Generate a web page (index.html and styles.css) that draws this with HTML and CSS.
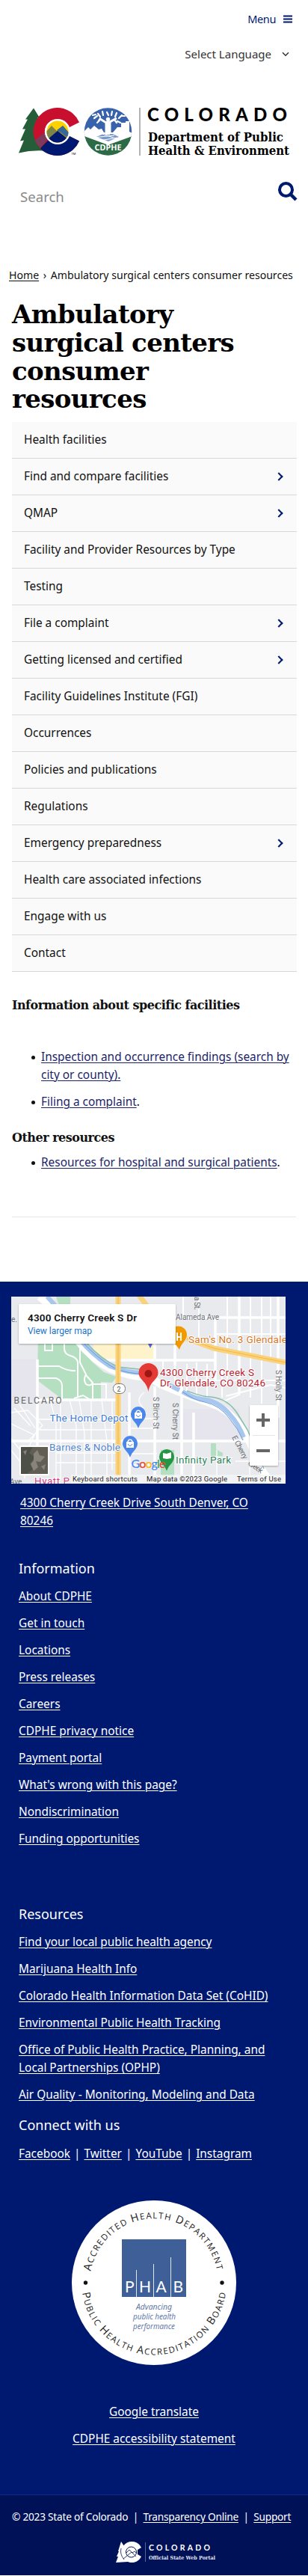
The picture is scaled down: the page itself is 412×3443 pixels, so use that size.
FILE: index.html
```html
<!DOCTYPE html>
<html lang="en">
<head>
<meta charset="utf-8">
<title>Ambulatory surgical centers consumer resources</title>
<link rel="stylesheet" href="styles.css">
</head>
<body>
<header class="top">
  <a class="menu-toggle">Menu
    <svg width="12" height="11" viewBox="0 0 12 11"><path d="M0 1.5h12M0 5.5h12M0 9.5h12" stroke="#001970" stroke-width="1.8"/></svg>
  </a>
  <div class="language"><span>Select Language</span>
    <svg width="10" height="7" viewBox="0 0 10 7"><path d="M1 1.2l4 4 4-4" fill="none" stroke="#333" stroke-width="1.5"/></svg>
  </div>
  <svg class="logo" width="364" height="64" viewBox="25 144 364 64">
    <defs>
      <clipPath id="disc"><circle cx="77" cy="176" r="14.5"/></clipPath>
      <clipPath id="seal"><circle cx="144.500" cy="176" r="31.700"/></clipPath>
      <clipPath id="cshape"><path d="M106 163.500A32 32 0 1 0 106 188.500L91 181A16 16 0 1 1 91 171Z"/></clipPath>
    </defs>
    <path d="M45 144.500l8 13-3 0 6 12-3 0 6 32q-17-1-34 3l7-17-5 1 7-16-4 0 7-13-3 0z" fill="#245d38"/>
    <g clip-path="url(#cshape)">
      <path d="M40 140h70v70H40z" fill="#c8102e"/>
      <path d="M54 198l22-22h34v34H60z" fill="#001970"/>
      <path d="M46 188l14-11 6 6-12 15z" fill="#7d3b5c"/>
    </g>
    <circle cx="77" cy="176" r="17" fill="#fff"/>
    <g clip-path="url(#disc)">
      <path d="M60 158h34v36H60z" fill="#ffd100"/>
      <path d="M60 178l9-10 7 7 8-7 12 14v12H60z" fill="#7d8446"/>
      <path d="M76 174l8-6 14 16-10-2-6-5z" fill="#34699a"/>
      <path d="M58 191l19-16 20 16v8H58z" fill="#001970"/>
    </g>
    <text class="tm" x="95.500" y="206.500">TM</text>
    <g clip-path="url(#seal)">
      <path d="M110 140h70v45H110z" fill="#3862ac"/>
      <path d="M112 176l6-6 3 3 5-5 6 5 4-1 3 5h12l6-7h5v-6h6v-2h5v14l4 2v5l-33 12-32-12z" fill="#fff"/>
      <path d="M129 183l9-4h13l8 4-14 6z" fill="#7898cc"/>
      <path d="M124 184l29-3M133 188l24-4M137 179l20 7" stroke="#fff"/>
      <path d="M112 181l32.500 12 33-12v32h-66z" fill="#2c6b45" stroke="#fff" stroke-width="1.500"/>
      <path d="M142 179v-15l-8-5M147 179v-16l9-5" fill="none" stroke="#fff" stroke-width="3"/>
      <path d="M142 162h5v18h-6z" fill="#fff"/>
      <circle cx="144.500" cy="159.500" r="2.700" fill="#fff"/>
      <path d="M126 158l4-3M130 164l3-3M124 154l4-1M131 152l3 4M137 149l1 5M143 150l2 4M149 154l1-5M154 156l2-5M159 158l4-4M157 162l4 2M163 155h4M134 158l-3 5M153 160l3 4" stroke="#fff" stroke-width="2.200" stroke-linecap="round"/>
    </g>
    <text class="seal-text" x="126.500" y="200.500" textLength="36" lengthAdjust="spacingAndGlyphs">CDPHE</text>
    <path d="M187 144v64" stroke="#666"/>
    <text class="logo-name" x="197" y="161.500" textLength="187">COLORADO</text>
    <text class="logo-dept" x="198" y="189" textLength="181" lengthAdjust="spacingAndGlyphs">Department of Public</text>
    <text class="logo-dept" x="198" y="207" textLength="189" lengthAdjust="spacingAndGlyphs">Health &amp; Environment</text>
  </svg>
  <div class="search"><span>Search</span>
    <svg width="26" height="26" viewBox="0 0 26 26" fill="none" stroke="#001970"><circle cx="10.500" cy="10.500" r="8.500" stroke-width="4"/><path d="M17 17l7 7" stroke-width="4.500"/></svg>
  </div>
</header>
<main>
  <nav class="crumbs"><a>Home</a> <span>›</span> Ambulatory surgical centers consumer resources</nav>
  <h1>Ambulatory<br>surgical centers<br>consumer<br>resources</h1>
  <ul class="side-menu">
    <li>Health facilities</li>
    <li class="more">Find and compare facilities</li>
    <li class="more">QMAP</li>
    <li>Facility and Provider Resources by Type</li>
    <li>Testing</li>
    <li class="more">File a complaint</li>
    <li class="more">Getting licensed and certified</li>
    <li>Facility Guidelines Institute (FGI)</li>
    <li>Occurrences</li>
    <li>Policies and publications</li>
    <li>Regulations</li>
    <li class="more">Emergency preparedness</li>
    <li>Health care associated infections</li>
    <li>Engage with us</li>
    <li>Contact</li>
  </ul>
  <section class="content">
    <h2>Information about specific facilities</h2>
    <ul class="first">
      <li><a>Inspection and occurrence findings (search by<br>city or county).</a></li>
      <li><a>Filing a complaint</a>.</li>
    </ul>
    <h2 class="other">Other resources</h2>
    <ul><li><a>Resources for hospital and surgical patients</a>.</li></ul>
    <hr>
  </section>
</main>
<footer>
  <svg class="map" width="367" height="250" viewBox="0 0 367 250">
    <path d="M0 0h367v250H0z" fill="#e8eaed"/>
    <path d="M0 84h35v55H0zM230 150h75v43h-75z" fill="#e6e5ed"/>
    <path d="M110 60h82v23h-82z" fill="#fef3cb"/>
    <path d="M36 55h50l22 32 16 14 17 6-6 8-15-1v23H79l-6-1v1H68l-33-25zM60 0h19v12H64z" fill="#b5dfc1"/>
    <path d="M200 205h18v35h-18zM267 196h7v8l9 5v4h-16z" fill="#b5dfc1"/>
    <g fill="none" stroke="#fff" stroke-width="2">
      <path d="M35 138h106M35 84v153M0 193h367M126 85h147M200 28h167M158 128v116M192 120v124M219 40v52M228 120v118M244 155v90M273 28v85M305 0v130M357 0v162M192 85v-22" stroke-width="3.500"/>
      <path d="M230 0v28M251 0v58M289 0v110M320 0v135M335 0v143M347 0v84M203 85v20M219 85v45M235 90v37M248 88v45M262 90v50M282 135v-39M245 112h122M275 50h92M287 133l60-15 20 4M284 140l21-9v-20"/>
      <path d="M45 57v15h10V57M71 55v14q0 8 8 10t10 8v47M36 93h28q12 7 22 6M36 109h24q8 3 8 10v18M92 57v31l8 16q-4 7 0 13 6 4 9-2l-9-10M84 136l12-4 10 6M109 136v-19h18v19"/>
      <path d="M52 138l8 30v75M66 140v104M78 138l9 35v70M91 138l7 45v60M107 138v106M121 138l7 55v50M135 138v94M37 164h100M38 178h100M60 209h80M60 222h80M178 128q-12 9-3 19l6 10M145 163h45M160 176h35M160 210h35M158 225h34M275 205v40M319 192v50M335 193v50M300 220h67M0 155l22-3 20 20-18 20M0 170l31 15-16 35M4 149l22 24M11 144l21 32M0 190l18 23v30M-2 203l27 34M144 20h-10" stroke-width="1.300"/>
    </g>
    <path d="M38 0l30 27q10 12 22 33 17 23 44 37 26 11 51 11l16 10q31 13 55 21 25 7 38 20 24 23 36 65l18 26" fill="none" stroke="#fff" stroke-width="10"/>
    <path d="M48 0l25 27 19 30q15 20 40 36 23 9 46 9M211 118l14 7m4 2q13 8 26 10 22 2 37 20 12 13 19 31" fill="none" stroke="#a8c7ee" stroke-width="6"/>
    <path d="M93 58q20 23 44 37 20 9 42 8M229 127q16 12 30 14 20 4 33 22 12 14 18 29" fill="none" stroke="#6799db"/>
    <path d="M100 61q20 23 43 33l37 4M235 126q20 8 31 8 24 2 37 23l13 21 22 52" fill="none" stroke="#87bea9" stroke-width="1.500"/>
    <path d="M143 0v240M170-3l12 16M235 56l36 13 96 19" fill="none" stroke="#f9d27a" stroke-width="7"/>
    <path d="M143 0v240M235 56l36 13 96 19" fill="none" stroke="#f5b64b" stroke-width="1"/>
    <rect x="136.500" y="116.500" width="16" height="13" rx="6" fill="#fff" stroke="#777"/><text x="141.500" y="126.500" font-size="9" fill="#555">2</text>
    <g class="road-label">
      <text x="0" y="34">e.</text><text x="220" y="31" textLength="58">Alameda Ave</text>
      <text transform="translate(245 0) rotate(90)" textLength="18">a St.</text>
      <text transform="translate(354 98) rotate(90)" textLength="41">S Holly St</text>
      <text transform="translate(190 134) rotate(90)" textLength="43">S Birch St</text>
      <text transform="translate(216 142) rotate(90)" textLength="49">S Cherry St</text>
      <text transform="translate(295 188) rotate(62)" textLength="34">E Cherry</text>
      <text transform="translate(316 224) rotate(35)" textLength="22">Creek</text>
      <text x="-2" y="251">Ave.</text>
    </g>
    <text x="3.500" y="143" font-size="12" fill="#666" textLength="64">BELCARO</text>
    <g class="pins">
      <path d="M225 71c-6-10-13-12-13-20a11 11 0 0 1 23 0c0 8-8 11-10 20z" fill="#f29900"/>
      <path d="M170 176c-3-9-10-11-10-19a10 10 0 0 1 20 0c0 8-7 10-10 19z" fill="#4a86ec"/>
      <path d="M159 215c-3-9-10-11-10-19a10 10 0 0 1 20 0c0 8-7 10-10 19z" fill="#4a86ec"/>
      <path d="M208 233c-3-9-10-11-10-19a10 10 0 0 1 20 0c0 8-7 10-10 19z" fill="#259646"/>
      <path d="M165 155h10v8h-10zM154 194h10v8h-10zM203 209l5 1 6-2v8l-6 1-5-1z" fill="#fff"/>
      <path d="M167 156c0-5 6-5 6 0M156 195c0-5 6-5 6 0" stroke="#fff" stroke-width="1.500" fill="none"/>
      <path d="M167 158q3 5 6 0M156 197q3 5 6 0" stroke="#4a86ec" fill="none"/>
      <path d="M222 48v11M227 48v11M222 54h5" stroke="#fff" stroke-width="2"/>
      <path d="M183 63h6l-3 6z" fill="#5763d8"/>
      <path d="M183.500 127c-2-14-13-16-13-25a13 13 0 0 1 26 0c0 9-11 11-13 25z" fill="#e53935"/><circle cx="183.500" cy="103" r="5" fill="#9d1713"/>
    </g>
    <g class="place">
      <text x="237" y="62" fill="#d9781e" textLength="132">Sam's No. 3 Glendale</text>
      <text x="199" y="106" fill="#b92330" textLength="126">4300 Cherry Creek S</text>
      <text x="199" y="120" fill="#b92330" textLength="141">Dr, Glendale, CO 80246</text>
      <text x="51.500" y="167" fill="#3b78d8" textLength="105">The Home Depot</text>
      <text x="51" y="206" fill="#5583d0" textLength="95">Barnes &amp; Noble</text>
      <text x="220" y="223" fill="#31835b" textLength="74">Infinity Park</text>
      <text x="31" y="251" fill="#d83a80" textLength="47">Hyatt P</text>
    </g>
    <text class="google" x="160.500" y="229" textLength="46"><tspan fill="#4285f4">G</tspan><tspan fill="#ea4335">o</tspan><tspan fill="#fbbc05">o</tspan><tspan fill="#4285f4">g</tspan><tspan fill="#34a853">l</tspan><tspan fill="#ea4335">e</tspan></text>
    <path d="M80 238h287v12H80z" fill="#f5f5f5" opacity=".75"/>
    <g class="credits"><text x="82" y="247" textLength="87">Keyboard shortcuts</text><text x="181" y="247" textLength="108">Map data ©2023 Google</text><text x="302" y="247" textLength="59">Terms of Use</text></g>
    <g class="panel"><rect x="10" y="10" width="210" height="53" rx="1"/><rect x="319" y="145" width="38" height="81" rx="1"/></g>
    <text class="map-title" x="22" y="33" textLength="146">4300 Cherry Creek S Dr</text>
    <text x="22" y="50" font-size="12" fill="#1a73c8" textLength="86">View larger map</text>
    <path d="M337 156v18M328 165h18M328 206h18" stroke="#666" stroke-width="4"/><path d="M323 185.500h30" stroke="#e6e6e6"/>
    <rect x="11" y="199" width="40" height="40" rx="2" fill="#fff"/><rect x="13" y="201" width="36" height="36" fill="#615f55"/>
    <path d="M13 201h16l-5 8 8 6-7 8 6 6-10 8h-8z" fill="#4c5047"/><path d="M30 210l5-5 3 7 7 2-6 7-6-1 3 8-6 5-4-9 4-5zM16 207l5-2-2 7zM40 227l6-3-2 8z" fill="#89847a"/>
  </svg>
  <p class="address"><a>4300 Cherry Creek Drive South Denver, CO<br>80246</a></p>
  <section class="links info">
    <h3>Information</h3>
    <a>About CDPHE</a><a>Get in touch</a><a>Locations</a><a>Press releases</a><a>Careers</a><a>CDPHE privacy notice</a><a>Payment portal</a><a>What's wrong with this page?</a><a>Nondiscrimination</a><a>Funding opportunities</a>
  </section>
  <section class="links resources">
    <h3>Resources</h3>
    <a>Find your local public health agency</a><a>Marijuana Health Info</a><a>Colorado Health Information Data Set (CoHID)</a><a>Environmental Public Health Tracking</a><a>Office of Public Health Practice, Planning, and<br>Local Partnerships (OPHP)</a><a>Air Quality - Monitoring, Modeling and Data</a>
    <h3 class="connect">Connect with us</h3>
    <p class="social"><a>Facebook</a><i>|</i><a>Twitter</a><i>|</i><a>YouTube</a><i>|</i><a>Instagram</a></p>
  </section>
  <svg class="phab" width="220" height="220" viewBox="0 0 220 220">
    <defs><path id="arc-top" d="M25.400 94.800A86 86 0 0 1 194.600 94.800"/><path id="arc-bottom" d="M14 123.500A97 97 0 0 0 206 123.500"/></defs>
    <circle cx="110" cy="110" r="110" fill="#fff"/>
    <g class="ring">
      <text><textPath href="#arc-top" textLength="237"><tspan class="cap">A</tspan>CCREDITED <tspan class="cap">H</tspan>EALTH <tspan class="cap">D</tspan>EPARTMENT</textPath></text>
      <text><textPath href="#arc-bottom" textLength="276"><tspan class="cap">P</tspan>UBLIC <tspan class="cap">H</tspan>EALTH <tspan class="cap">A</tspan>CCREDITATION <tspan class="cap">B</tspan>OARD</textPath></text>
    </g>
    <circle cx="18.500" cy="110" r="2.700" fill="#111"/><circle cx="201" cy="110" r="2.700" fill="#111"/>
    <path d="M67 52h86v77H67z" fill="#3e5f98"/>
    <path d="M86.500 93v36M109.500 85v44M132.500 76v53" stroke="#dfe8f5"/>
    <g class="phab-name"><text x="71" y="122.500">P</text><text x="90" y="122.500">H</text><text x="112.500" y="122.500">A</text><text x="135.500" y="122.500">B</text></g>
    <g class="phab-tag"><text x="86" y="145.500" textLength="48" lengthAdjust="spacingAndGlyphs">Advancing</text><text x="82" y="158.500" textLength="57" lengthAdjust="spacingAndGlyphs">public health</text><text x="82" y="171.500" textLength="56" lengthAdjust="spacingAndGlyphs">performance</text></g>
  </svg>
  <div class="links bottom-links"><a>Google translate</a><a>CDPHE accessibility statement</a></div>
  <div class="bar">
    <p>© 2023 State of Colorado<i>|</i><a>Transparency Online</a><i>|</i><a>Support</a></p>
    <svg width="136" height="29" viewBox="0 0 136 29">
      <path d="M9 0l4 6-1 1 3 5 3 15-16 1 3-8-2 0 3-7-1 0z" fill="#fff"/>
      <path d="M36 8A14 14 0 1 0 36 20L31 17V11Z" fill="#fff"/>
      <circle cx="22.500" cy="14" r="7" fill="none" stroke="#001158"/><path d="M12 23l11-9 6 6M16 15l4-4 4 4 3-2 3 3M9 9q-2 8 4 15" fill="none" stroke="#001158" stroke-width=".8"/>
      <path d="M41.500 1v26" stroke="#59659a"/>
      <text class="mini-name" x="46" y="11.500" textLength="82">COLORADO</text>
      <text class="mini-tag" x="46" y="24" textLength="89" lengthAdjust="spacingAndGlyphs">Official State Web Portal</text>
    </svg>
  </div>
</footer>
</body>
</html>
```
FILE: styles.css
```css
* { box-sizing: border-box; }
body { margin: 0; background: #fff; color: #111; font: 15.4px/24px "Noto Sans", sans-serif; }
ul, p, h1, h2, h3 { margin: 0; padding: 0; }
ul { list-style: none; }
a { text-decoration: underline; text-underline-offset: 2px; text-decoration-thickness: 1px; }
svg { display: block; flex: none; letter-spacing: 0; }
i { font-style: normal; margin: 0 5px; }

.top { height: 340px; display: flex; flex-direction: column; }
.menu-toggle { display: flex; align-items: center; justify-content: flex-end; gap: 10px; margin: 13px 21px 0 0; height: 24px; color: #001970; font-size: 14.5px; text-decoration: none; letter-spacing: -0.4px; }
.language { display: flex; align-items: center; justify-content: flex-end; gap: 14px; margin: 23px 25px 0 0; height: 24px; color: #333; font-size: 15px; }
.logo { margin: 60px 0 0 25px; overflow: visible; }
.tm { font-size: 4px; }
.seal-text { font: bold 10px "Noto Sans", sans-serif; fill: #fff; }
.logo-name { font: 900 24px Lato, sans-serif; }
.logo-dept { font: bold 16.5px "DejaVu Serif", serif; }
.search { display: flex; justify-content: space-between; margin: 35px 14px 0 27px; color: #8a8a8a; font-size: 18.6px; }
.search span { padding-top: 8px; }

.crumbs { height: 24px; margin: 16px 0 0 12px; font-size: 14.1px; white-space: nowrap; }
.crumbs span { margin: 0 2px; }
h1 { margin: 22px 0 0 16px; color: #000; font: bold 34px/37.8px "DejaVu Serif", serif; letter-spacing: -0.65px; }
.side-menu { margin: 10.8px 15px 0 16px; background: #fafafa; }
.side-menu li { display: flex; align-items: center; justify-content: space-between; height: 49px; padding: 0 20px 0 16px; border-bottom: 1px solid #d8d8d8; }
.side-menu .more::after { content: ""; width: 6px; height: 6px; border: solid #001970; border-width: 2px 2px 0 0; transform: rotate(45deg); }
.content { height: 414px; padding: 33px 16px 0; }
.content h2 { font: bold 16px/24px "DejaVu Serif", serif; letter-spacing: -0.5px; }
.content ul { padding-left: 39px; white-space: nowrap; }
.content .first { padding-top: 45px; }
.content li { position: relative; margin-bottom: 12px; }
.content li::before { content: ""; position: absolute; left: -13px; top: 10px; width: 5px; height: 5px; border-radius: 50%; background: #111; }
.content a { color: #1b2469; }
.content .other { margin-top: 24px; margin-bottom: 9px; }
.content hr { margin: 60px 0 0; border: 0; border-top: 1px solid #e6e6e6; }

footer { background: #001970; color: #fff; padding-top: 20px; }
.map { margin-left: 15px; font-family: Roboto, sans-serif; }
.road-label { font-size: 10px; fill: #6c7075; }
.place { font-size: 13.5px; stroke: #fff; stroke-width: 2px; paint-order: stroke; }
.google { font: 500 16px Lato, sans-serif; }
.credits { font-size: 9.5px; fill: #222; }
.panel { fill: #fff; filter: drop-shadow(0 1px 1px rgba(0, 0, 0, .3)); }
.map-title { font-size: 13.5px; font-weight: 600; fill: #111; }
.address { margin: 14px 0 0 27px; }
.links { display: flex; flex-direction: column; align-items: flex-start; margin-left: 25px; }
.links > a { margin-bottom: 12px; }
.links h3 { font-size: 18px; font-weight: 400; line-height: 28px; margin-bottom: 12px; }
.info { padding-top: 37px; }
.resources { padding-top: 62px; }
.links .connect { margin: 2px 0 13px; }
.phab { margin: 50px auto 0 96px; }
.ring { font: 11.5px "Open Sans", sans-serif; fill: #222; font-weight: 500; }
.cap { font-size: 14.5px; }
.phab-name { font: 21px Lato, sans-serif; fill: #fff; }
.phab-tag { font: italic 10px "Noto Sans", sans-serif; fill: #6379a9; }
.bottom-links { align-items: center; margin: 51px 0 0; }
.bar { height: 108px; margin-top: 50px; background: #001158; border-top: 1px solid #102a80; padding: 17px 0 0 16px; font-size: 13.7px; letter-spacing: -0.25px; white-space: nowrap; }
.bar i { margin: 0 6.5px; }
.bar svg { margin: 21px 0 0 137px; }
.mini-name { font: bold 10.5px Lato, sans-serif; fill: #fff; }
.mini-tag { font: bold 7px "DejaVu Serif", serif; fill: #e2e6f3; }
```
